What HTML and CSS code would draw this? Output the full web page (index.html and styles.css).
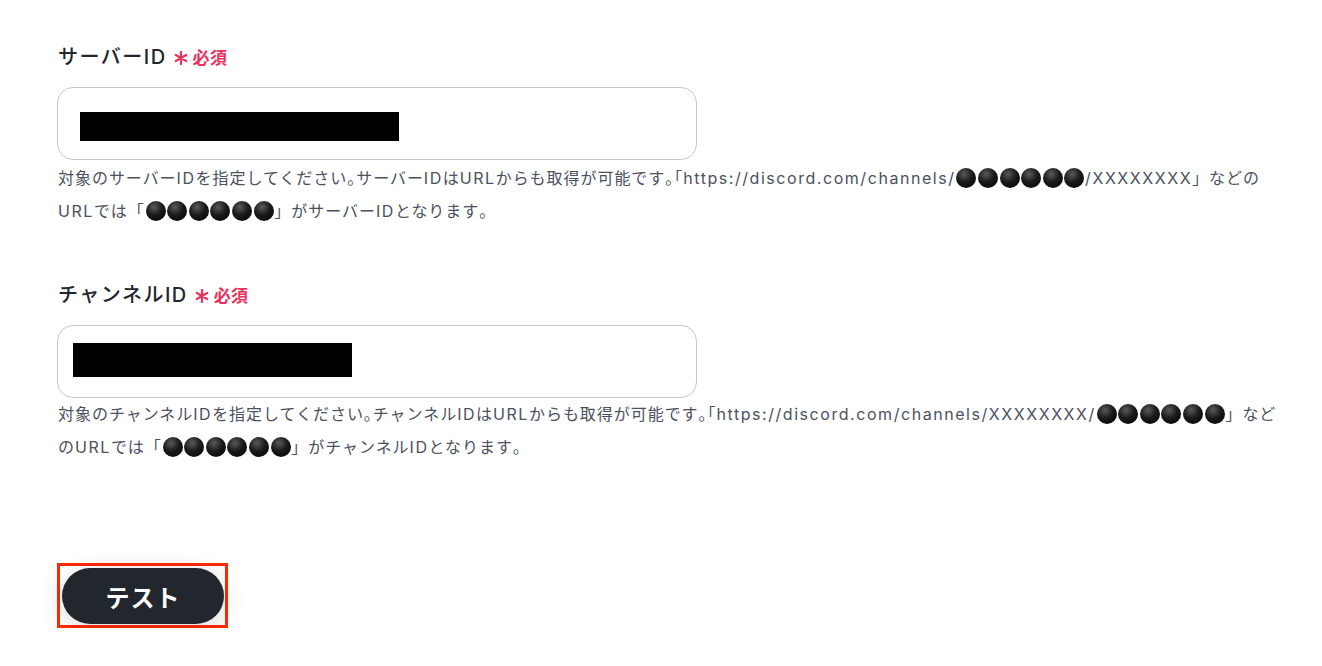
FILE: index.html
```html
<!DOCTYPE html>
<html lang="ja">
<head>
  <meta charset="UTF-8">
  <title>Discord設定</title>
  <link rel="stylesheet" href="styles.css">
</head>
<body>
  <div class="form">
    <div class="field">
      <label class="label">サーバーID <span class="req"><svg class="star" viewBox="0 0 14 14"><path d="M7 1v12M1.8 4l10.4 6M1.8 10l10.4-6"/></svg>必須</span></label>
      <div class="input"><span class="mask mask-server"></span></div>
      <p class="help">対象のサーバー<span class="en">ID</span>を指定してください<span class="half">。</span>サーバー<span class="en">ID</span>は<span class="en">URL</span>からも取得が可能です<span class="half">。</span>「<span class="en">https://discord.com/channels/</span><span class="dots"><i></i><i></i><i></i><i></i><i></i><i></i></span><span class="en">/XXXXXXXX</span>」などの<span class="en">URL</span>では「<span class="dots"><i></i><i></i><i></i><i></i><i></i><i></i></span>」がサーバー<span class="en">ID</span>となります<span class="half">。</span></p>
    </div>

    <div class="field">
      <label class="label">チャンネルID <span class="req"><svg class="star" viewBox="0 0 14 14"><path d="M7 1v12M1.8 4l10.4 6M1.8 10l10.4-6"/></svg>必須</span></label>
      <div class="input"><span class="mask mask-channel"></span></div>
      <p class="help">対象のチャンネル<span class="en">ID</span>を指定してください<span class="half">。</span>チャンネル<span class="en">ID</span>は<span class="en">URL</span>からも取得が可能です<span class="half">。</span>「<span class="en">https://discord.com/channels/XXXXXXXX/</span><span class="dots"><i></i><i></i><i></i><i></i><i></i><i></i></span>」などの<span class="en">URL</span>では「<span class="dots"><i></i><i></i><i></i><i></i><i></i><i></i></span>」がチャンネル<span class="en">ID</span>となります<span class="half">。</span></p>
    </div>

    <div class="actions">
      <div class="highlight">
        <button class="btn-test">テスト</button>
      </div>
    </div>
  </div>
</body>
</html>
```

FILE: styles.css
```css
body {
  margin: 0;
  background-color: #fff;
  font-family: "Inter", "Noto Sans CJK JP", sans-serif;
  color: #22262d;
}

.form {
  width: 1224px;
  padding: 42px 0 0 58px;
}

.field {
  margin-bottom: 52px;
}

.label {
  display: block;
  font-size: 20px;
  line-height: 30px;
  font-weight: 500;
  letter-spacing: 1.5px;
}

.req {
  color: #e8335f;
  font-size: 17px;
  font-weight: 700;
  letter-spacing: 0.5px;
}

.star {
  width: 14px;
  height: 14px;
  margin: 0 5px 0 0;
  vertical-align: -1px;
  fill: none;
  stroke: #e8335f;
  stroke-width: 2.2;
  stroke-linecap: round;
}

.input {
  box-sizing: border-box;
  width: 640px;
  height: 73px;
  margin: 14px 0 0 -1px;
  border: 1px solid #c3c8d0;
  border-radius: 16px;
  position: relative;
}

.mask {
  position: absolute;
  background-color: #000;
}

.mask-server {
  left: 22px;
  top: 24px;
  width: 319px;
  height: 29px;
}

.mask-channel {
  left: 15px;
  top: 17px;
  width: 279px;
  height: 34px;
}

.help {
  margin: 0;
  padding-top: 2px;
  font-size: 16px;
  line-height: 33px;
  letter-spacing: 0.96px;
  color: #4b5160;
}

.field + .field .help {
  padding-top: 0;
}

/* 欧文は少し広めに */
.help .en {
  letter-spacing: 1.55px;
}

/* 句点は半角幅に詰める */
.half {
  font-feature-settings: "halt";
}

.dots {
  white-space: nowrap;
}

.dots i {
  display: inline-block;
  width: 20px;
  height: 20px;
  margin: 0 0.8px;
  border-radius: 50%;
  vertical-align: -4px;
  background: radial-gradient(circle at 40% 30%, #5a5a5a 0%, #1a1a1a 45%, #000 100%);
}

.actions {
  padding-top: 47px;
}

.highlight {
  display: inline-block;
  margin-left: -1px;
  border: 3px solid #ff2a00;
  padding: 2px 1px 1px 2px;
}

.btn-test {
  display: block;
  width: 162px;
  height: 56px;
  border: none;
  border-radius: 28px;
  background-color: #22272e;
  color: #fff;
  font-family: "Inter", "Noto Sans CJK JP", sans-serif;
  font-size: 24px;
  font-weight: 700;
  letter-spacing: 1px;
  box-shadow: 0 4px 24px rgba(0, 0, 0, 0.15);
}
```
